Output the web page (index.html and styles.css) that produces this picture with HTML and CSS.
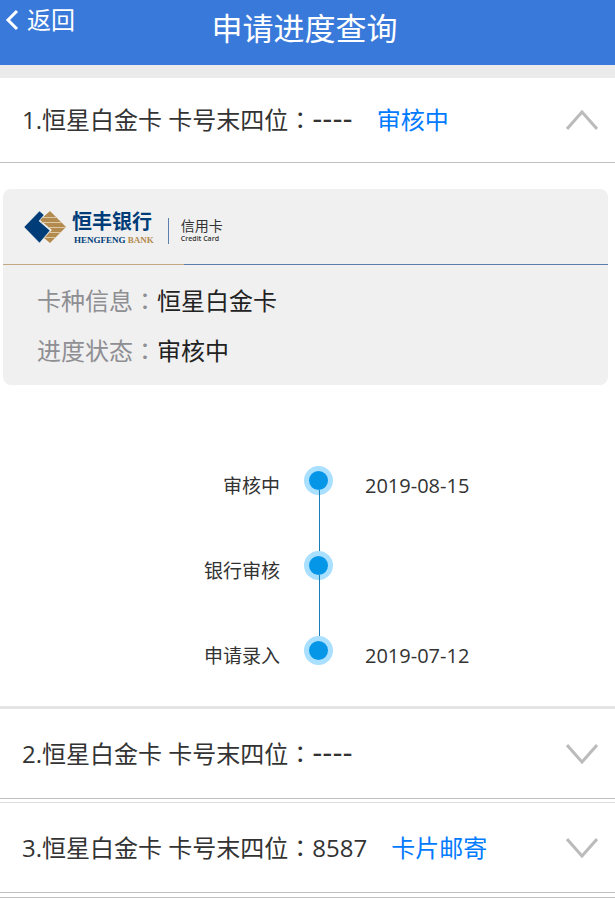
FILE: index.html
```html
<!DOCTYPE html>
<html lang="zh-CN">
<head>
<meta charset="utf-8">
<meta name="viewport" content="width=device-width, initial-scale=1">
<title>申请进度查询</title>
<link rel="stylesheet" href="styles.css">
</head>
<body>
<header class="topbar">
  <a class="back" href="#">
    <svg class="back-icon" viewBox="0 0 14 22" aria-hidden="true"><path d="M12 2 3 11l9 9"/></svg>
    <span>返回</span>
  </a>
  <h1 class="title">申请进度查询</h1>
</header>

<main>
  <section class="item">
    <button class="item-head item-head-open" type="button" aria-expanded="true" aria-controls="detail-1">
      <span class="item-name">1.恒星白金卡 卡号末四位<span class="colon" lang="zh-TW">：</span><span class="mask">----</span></span>
      <span class="item-status">审核中</span>
      <svg class="chevron" viewBox="0 0 32 20" aria-hidden="true"><path d="M1 19 16 2l15 17"/></svg>
    </button>
    <div class="detail" id="detail-1">
      <div class="card">
        <div class="brand">
          <svg class="brand-mark" viewBox="0 0 42 32" aria-hidden="true">
            <path class="mark-gold" d="M26 0 42 16 26 32 20 27 28 19 16 9z"/>
            <path class="mark-lines" d="M19 6.500H32.500M17 11.500H37.500M24 16.500H41.500M26 21.500H36.500M21 26.500H31.500"/>
            <path class="mark-blue" d="M15.500 0 20 4 15 10 26 19.500 15.500 32 0 16z"/>
          </svg>
          <div class="brand-bank">
            <span class="bank-cn">恒丰银行</span>
            <span class="bank-en">HENGFENG <span class="gold">BANK</span></span>
          </div>
          <div class="brand-product">
            <span class="product-cn">信用卡</span>
            <span class="product-en">Credit Card</span>
          </div>
        </div>
        <dl class="info">
          <div class="info-row"><dt>卡种信息<span class="colon" lang="zh-TW">：</span></dt><dd>恒星白金卡</dd></div>
          <div class="info-row"><dt>进度状态<span class="colon" lang="zh-TW">：</span></dt><dd>审核中</dd></div>
        </dl>
      </div>
      <ol class="timeline">
        <li class="step"><span class="step-name">审核中</span><span class="dot"></span><time class="step-date">2019-08-15</time></li>
        <li class="step"><span class="step-name">银行审核</span><span class="dot"></span></li>
        <li class="step"><span class="step-name">申请录入</span><span class="dot"></span><time class="step-date">2019-07-12</time></li>
      </ol>
    </div>
  </section>

  <section class="item">
    <button class="item-head" type="button" aria-expanded="false">
      <span class="item-name">2.恒星白金卡 卡号末四位<span class="colon" lang="zh-TW">：</span><span class="mask">----</span></span>
      <svg class="chevron" viewBox="0 0 32 20" aria-hidden="true"><path d="M1 1 16 18 31 1"/></svg>
    </button>
  </section>

  <section class="item">
    <button class="item-head" type="button" aria-expanded="false">
      <span class="item-name">3.恒星白金卡 卡号末四位<span class="colon" lang="zh-TW">：</span>8587</span>
      <span class="item-status">卡片邮寄</span>
      <svg class="chevron" viewBox="0 0 32 20" aria-hidden="true"><path d="M1 1 16 18 31 1"/></svg>
    </button>
  </section>
  <div class="list-end"></div>
</main>
</body>
</html>
```
FILE: styles.css
```css
* {
  box-sizing: border-box;
}

body {
  margin: 0;
  background: #fff;
  color: #333;
  font-family: "Open Sans", "Noto Sans CJK SC", sans-serif;
  font-size: 24px;
}

.topbar {
  display: grid;
  grid-template-columns: 1fr auto 1fr;
  height: 78px;
  padding-right: 6px;
  background: #3979da;
  border-bottom: 13px solid #ebebeb;
  color: #fff;
}

.back {
  display: flex;
  align-items: center;
  align-self: start;
  gap: 8px;
  height: 40px;
  padding-left: 5px;
  color: #fff;
  line-height: 40px;
  text-decoration: none;
}

.back-icon {
  width: 14px;
  height: 22px;
  fill: none;
  stroke: #fff;
  stroke-width: 3;
}

.title {
  margin: 0;
  font-size: 31px;
  font-weight: 400;
  line-height: 56px;
}

.item-head {
  display: flex;
  align-items: center;
  width: 100%;
  height: 90px;
  padding: 0 17px 0 22px;
  border: 0;
  border-bottom: 1px solid #c0c0c0;
  background: #fff;
  color: #333;
  font: inherit;
  line-height: 36px;
  text-align: left;
}

.item-head-open {
  height: 85px;
}

.item + .item {
  margin-top: 3px;
  border-top: 1px solid #dedede;
}

.item:first-child + .item {
  margin-top: 0;
  border-top: 3px solid #e4e4e4;
}

.colon {
  font-family: "Noto Sans CJK TC", sans-serif;
  line-height: 24px;
}

.mask {
  font-family: "DejaVu Sans", sans-serif;
  font-size: 28px;
  line-height: 24px;
}

.item-status {
  margin-left: 24px;
  color: #007aff;
}

.chevron {
  width: 32px;
  height: 20px;
  margin-left: auto;
  fill: none;
  stroke: #bbb;
  stroke-width: 3;
}

.detail {
  padding-top: 26px;
}

.card {
  margin: 0 7px 0 3px;
  border-radius: 8px;
  background: #f0f0f0;
}

.brand {
  display: flex;
  align-items: center;
  height: 76px;
  padding-left: 21px;
  border-bottom: 1px solid;
  border-image: linear-gradient(to right, #c3a983 30%, #5c7fae 30%) 1;
}

.brand-mark {
  width: 42px;
  height: 32px;
}

.mark-gold {
  fill: #b38b4f;
}

.mark-lines {
  fill: none;
  stroke: #dcc8a4;
  stroke-width: 1;
}

.mark-blue {
  fill: #003d78;
  stroke: #f0f0f0;
  stroke-width: 0.5;
}

.brand-bank {
  display: flex;
  flex-direction: column;
  margin: 2px 0 0 6px;
  color: #003d78;
}

.bank-cn {
  font-size: 20px;
  font-weight: 700;
  line-height: 24px;
}

.bank-en {
  padding-left: 2px;
  font-family: "Liberation Serif", serif;
  font-size: 9px;
  font-weight: 700;
  line-height: 12px;
}

.gold {
  color: #b38b4f;
}

.brand-product {
  display: flex;
  flex-direction: column;
  margin: 9px 0 0 14px;
  padding-left: 12px;
  border-left: 1px solid #5c7fae;
}

.product-cn {
  font-size: 14px;
  line-height: 16px;
}

.product-en {
  font-size: 7px;
  font-weight: 600;
  line-height: 10px;
}

.info {
  margin: 0;
  padding: 11px 34px 9px;
}

.info-row {
  display: flex;
  line-height: 50px;
}

.info dt {
  color: #8e8e93;
}

.info dd {
  margin: 0;
  color: #222;
}

.timeline {
  margin: 0;
  padding: 81px 0 0 22px;
  list-style: none;
}

.step {
  position: relative;
  display: grid;
  grid-template-columns: 1fr 29px 1fr;
  height: 85px;
  line-height: 40px;
}

.step-name {
  padding-right: 24px;
  font-size: 19px;
  text-align: right;
}

.dot {
  width: 29px;
  height: 29px;
  border: 5px solid #a9e0ff;
  border-radius: 50%;
  background: #0696e8;
}

.step:not(:last-child)::after {
  content: "";
  position: absolute;
  top: 24px;
  bottom: 0;
  left: 50%;
  width: 1px;
  background: #167fb8;
}

.step:last-child {
  height: 70px;
}

.step-date {
  padding-left: 32px;
  font-size: 20px;
}

.list-end {
  height: 5px;
  border-bottom: 1px solid #c0c0c0;
}
```
